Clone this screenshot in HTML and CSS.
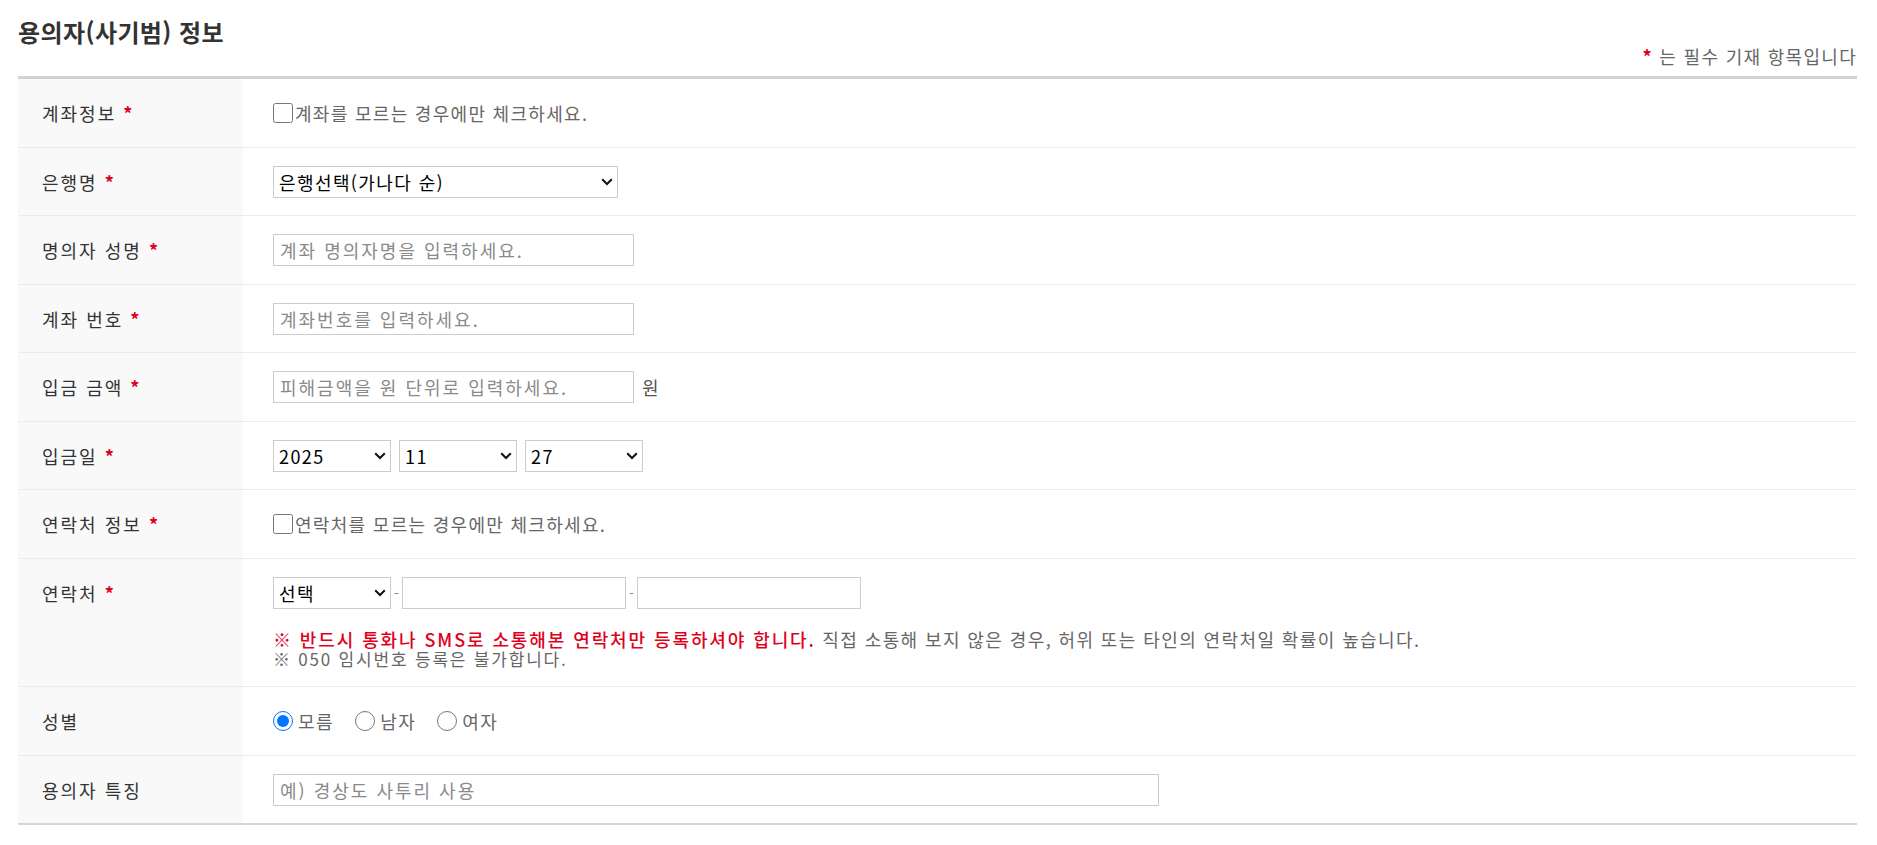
FILE: index.html
```html
<!DOCTYPE html>
<html lang="ko">
<head>
<meta charset="utf-8">
<title>용의자(사기범) 정보</title>
<link rel="stylesheet" href="styles.css">
</head>
<body>
<div class="wrap">
  <div class="head">
    <h2 class="title">용의자(사기범) 정보</h2>
    <p class="req-note"><span class="star">*</span> 는 필수 기재 항목입니다</p>
  </div>
  <table class="form-table">
    <colgroup><col class="col-label"><col></colgroup>
    <tbody>
      <tr>
        <th>계좌정보 <span class="star">*</span></th>
        <td><div class="field"><label class="check"><input type="checkbox" class="cb">계좌를 모르는 경우에만 체크하세요.</label></div></td>
      </tr>
      <tr>
        <th>은행명 <span class="star">*</span></th>
        <td><div class="field"><span class="sel-wrap"><select class="sel sel-bank"><option>은행선택(가나다 순)</option></select><svg class="chev" width="12" height="8" viewBox="0 0 12 8"><path d="M1.2 1.2 L6 6 L10.8 1.2" fill="none" stroke="#111" stroke-width="2"/></svg></span></div></td>
      </tr>
      <tr>
        <th>명의자 성명 <span class="star">*</span></th>
        <td><div class="field"><input type="text" class="txt txt-md" placeholder="계좌 명의자명을 입력하세요."></div></td>
      </tr>
      <tr>
        <th>계좌 번호 <span class="star">*</span></th>
        <td><div class="field"><input type="text" class="txt txt-md" placeholder="계좌번호를 입력하세요."></div></td>
      </tr>
      <tr>
        <th>입금 금액 <span class="star">*</span></th>
        <td><div class="field"><input type="text" class="txt txt-md" placeholder="피해금액을 원 단위로 입력하세요."><span class="unit">원</span></div></td>
      </tr>
      <tr>
        <th>입금일 <span class="star">*</span></th>
        <td><div class="field gap8">
          <span class="sel-wrap"><select class="sel sel-sm"><option>2025</option></select><svg class="chev" width="12" height="8" viewBox="0 0 12 8"><path d="M1.2 1.2 L6 6 L10.8 1.2" fill="none" stroke="#111" stroke-width="2"/></svg></span>
          <span class="sel-wrap"><select class="sel sel-sm"><option>11</option></select><svg class="chev" width="12" height="8" viewBox="0 0 12 8"><path d="M1.2 1.2 L6 6 L10.8 1.2" fill="none" stroke="#111" stroke-width="2"/></svg></span>
          <span class="sel-wrap"><select class="sel sel-sm"><option>27</option></select><svg class="chev" width="12" height="8" viewBox="0 0 12 8"><path d="M1.2 1.2 L6 6 L10.8 1.2" fill="none" stroke="#111" stroke-width="2"/></svg></span>
        </div></td>
      </tr>
      <tr>
        <th>연락처 정보 <span class="star">*</span></th>
        <td><div class="field"><label class="check"><input type="checkbox" class="cb">연락처를 모르는 경우에만 체크하세요.</label></div></td>
      </tr>
      <tr>
        <th>연락처 <span class="star">*</span></th>
        <td>
          <div class="field"><span class="sel-wrap"><select class="sel sel-sm"><option>선택</option></select><svg class="chev" width="12" height="8" viewBox="0 0 12 8"><path d="M1.2 1.2 L6 6 L10.8 1.2" fill="none" stroke="#111" stroke-width="2"/></svg></span><span class="dash">-</span><input type="text" class="txt txt-ph"><span class="dash">-</span><input type="text" class="txt txt-ph"></div>
          <div class="notes">
            <p class="note1"><span class="warn">※ 반드시 통화나 SMS로 소통해본 연락처만 등록하셔야 합니다.</span> 직접 소통해 보지 않은 경우, 허위 또는 타인의 연락처일 확률이 높습니다.</p>
            <p class="note2">※ 050 임시번호 등록은 불가합니다.</p>
          </div>
        </td>
      </tr>
      <tr>
        <th>성별</th>
        <td><div class="field"><label class="radio"><input type="radio" name="sex" checked>모름</label><label class="radio"><input type="radio" name="sex">남자</label><label class="radio"><input type="radio" name="sex">여자</label></div></td>
      </tr>
      <tr>
        <th>용의자 특징</th>
        <td><div class="field"><input type="text" class="txt txt-lg" placeholder="예) 경상도 사투리 사용"></div></td>
      </tr>
    </tbody>
  </table>
</div>
</body>
</html>
```

FILE: styles.css
```css
* { box-sizing: border-box; }
html, body { margin: 0; padding: 0; background: #fff; }
body {
  font-family: "Noto Sans CJK KR", "Noto Sans", sans-serif;
  color: #333;
}
.wrap { padding: 16px 20px 0 18px; }
.head {
  display: flex;
  justify-content: space-between;
  align-items: flex-end;
  padding-bottom: 8px;
}
.title {
  margin: 0 0 20px 0;
  font-size: 24px;
  line-height: 32px;
  font-weight: 700;
  letter-spacing: 0.4px;
  color: #333;
}
.req-note {
  margin: 0;
  font-size: 18px;
  line-height: 24px;
  letter-spacing: 1.3px;
  color: #666;
}
.star { color: #e0001b; font-weight: 700; }
.form-table {
  width: 100%;
  border-collapse: collapse;
  table-layout: fixed;
  border-top: 3px solid #d2d2d2;
  border-bottom: 2px solid #d6d6d6;
}
.col-label { width: 225px; }
.form-table tr { border-bottom: 1px solid #ebebeb; }
.form-table tr:last-child { border-bottom: none; }
.form-table th {
  background: #f9f9f9;
  text-align: left;
  font-weight: 400;
  font-size: 18px;
  letter-spacing: 2px;
  line-height: 32px;
  color: #333;
  padding: 18px 24px 17.5px;
  vertical-align: top;
}
.form-table td {
  padding: 18px 30px 17.5px;
  vertical-align: top;
  font-size: 18px;
  color: #666;
}
.field {
  display: flex;
  align-items: center;
  height: 32px;
}
.gap8 { gap: 8px; }
.check { display: flex; align-items: center; color: #666; letter-spacing: 1.3px; }
.cb {
  width: 20px;
  height: 20px;
  margin: 0 2px 0 0;
}
.sel-wrap { position: relative; display: inline-flex; }
.chev {
  position: absolute;
  right: 5px;
  top: 12px;
  pointer-events: none;
}
.sel {
  -webkit-appearance: none;
  appearance: none;
  height: 32px;
  border: 1px solid #ccc;
  border-radius: 0;
  background: #fff;
  font-family: inherit;
  font-size: 18px;
  letter-spacing: 1.4px;
  color: #000;
  padding: 0 20px 0 5px;
}
.sel-bank { width: 345px; }
.sel-sm { width: 118px; }
.txt {
  height: 32px;
  border: 1px solid #ccc;
  border-radius: 0;
  padding: 0 6px;
  font-family: inherit;
  font-size: 18px;
  letter-spacing: 2px;
  color: #333;
  background: #fff;
}
.txt::placeholder { color: #8a8a8a; }
.txt-md { width: 361px; }
.txt-ph { width: 224px; }
.txt-lg { width: 886px; }
.unit { margin-left: 8px; color: #555; }
.dash { margin: 0 3px; color: #888; font-size: 14px; }
.notes { margin-top: 20px; }
.notes p { margin: 0; line-height: 20px; color: #666; }
.note1 { font-size: 18px; letter-spacing: 1.4px; }
.warn { color: #e0001b; font-weight: 500; letter-spacing: 1.9px; }
.note2 { font-size: 17px; letter-spacing: 1.8px; }
.radio {
  display: flex;
  align-items: center;
  margin-right: 21px;
  color: #666;
  letter-spacing: 1.5px;
}
.radio input {
  width: 20px;
  height: 20px;
  margin: 0 5px 0 0;
}
```
